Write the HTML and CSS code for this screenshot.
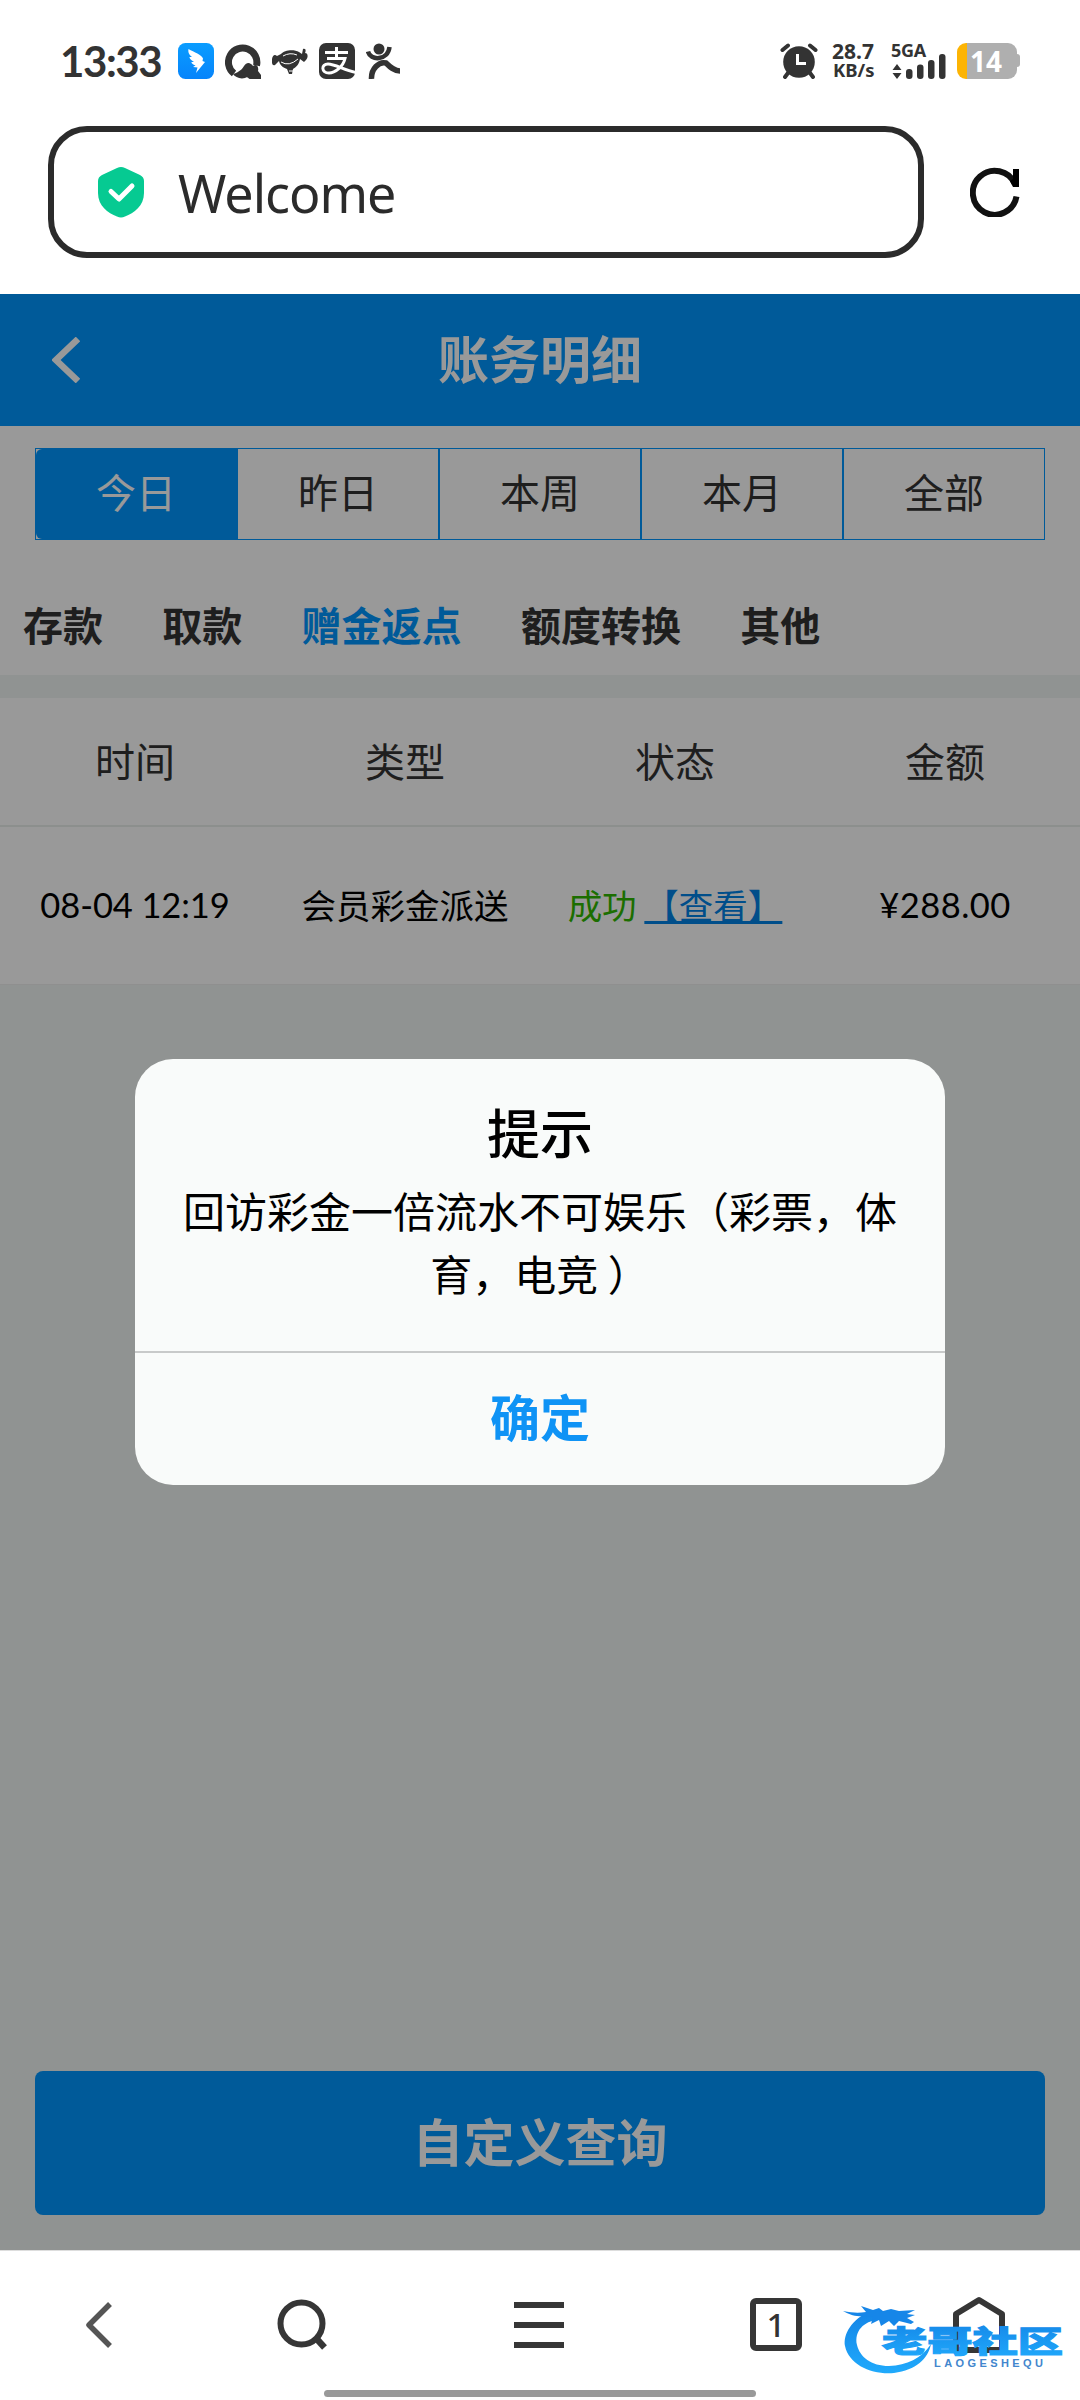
FILE: index.html
```html
<!DOCTYPE html>
<html lang="zh-CN">
<head>
<meta charset="utf-8">
<title>账务明细</title>
<link rel="stylesheet" href="styles.css">
</head>
<body>
<div class="phone">
  <header class="status">
    <span class="clock">13:33</span>
    <div class="apps">
      <svg width="36" height="36" viewBox="0 0 36 36"><defs><linearGradient id="wing" x2="0" y2="1"><stop stop-color="#0a9dff"/><stop offset="1" stop-color="#0784fb"/></linearGradient></defs><rect width="36" height="36" rx="7.5" fill="url(#wing)"/><path d="M10.500 6C16 9 24 12 25 15.500L24.500 18L27 19L18 30L19.500 24.500L15 24L17.500 22.500C14 21 13.500 20 13.500 19L16 19C12 16.500 11.500 15 11.500 14L14 14C10.500 11 10 9 10.500 6Z" fill="#fff"/></svg>
      <svg width="36" height="36" viewBox="0 0 36 36"><path d="M9 30.500A14.200 14.200 0 1 1 31.500 22.500" fill="none" stroke="#333" stroke-width="7"/><path d="M8 31C15 29 18 25 19 23C22 18 26 20 28 23C32 20 34 25 33 28L36 32V36H25C23 36 23 33 20 35C15 36.500 10 34 8 31Z" fill="#333"/></svg>
      <svg width="36" height="36" viewBox="0 0 36 36"><path d="M0 18C-.5 14 2 10 5 13L9 11C12 7 22 6 27 9L30 11L31 6C34 5 34 8 33 10C36 10 36.500 14 34 17L32 19L28 16C27 22 24 24 21 26L20 31H17L15 26C10 24 8 22 7 18L3 22C0 23 0 20 0 18Z" fill="#333"/><path d="M11 13Q18 9 25 12M9 19Q17 24 26 16M17 28h4" fill="none" stroke="#fff" stroke-width="1"/></svg>
      <svg width="36" height="36" viewBox="0 0 36 36"><rect width="36" height="36" rx="7" fill="#333"/><path d="M6 9.500H29M17.500 4V15M8 15.500H26C24 24 16 30 10 30C2 30 2 21 9 21C16 21 25 27 37 29.500" fill="none" stroke="#fff" stroke-width="3"/></svg>
      <svg width="36" height="36" viewBox="0 0 36 36"><circle cx="13" cy="6" r="5.500" fill="#333"/><path d="M2 8.500C4 18 22 18 23.500 4" fill="none" stroke="#333" stroke-width="4.500"/><path d="M5.500 36C5 26 13 18 20 20C24 24 28 28 34 28" fill="none" stroke="#333" stroke-width="5.500"/></svg>
    </div>
    <div class="signals">
      <svg class="alarm" width="38" height="36" viewBox="0 0 38 36"><circle cx="19" cy="19" r="15.800" fill="#333"/><path d="M2.500 7L8 2.500M30 2.500L35.500 7M8 30L5 34M30 30L33 34" stroke="#333" stroke-width="4" stroke-linecap="round"/><path d="M17.500 11V20.500H26" fill="none" stroke="#fff" stroke-width="3"/></svg>
      <div class="speed"><span>28.7</span><span>KB/s</span></div>
      <div class="cell"><span>5GA</span>
        <svg width="56" height="26" viewBox="0 0 56 26"><path d="M6 11L10.500 17H1.500ZM6 26L10.500 20H1.500Z" fill="#333"/><g fill="#333"><rect x="15" y="16" width="6.500" height="10" rx="3"/><rect x="26" y="11.500" width="6.500" height="14.500" rx="3"/><rect x="37" y="7" width="6.500" height="19" rx="3"/><rect x="48" y="1" width="6.500" height="25" rx="3"/></g></svg>
      </div>
      <div class="battery"><b>14</b></div>
    </div>
  </header>

  <div class="address">
    <div class="url">
      <svg width="46" height="52" viewBox="0 0 46 52"><path d="M19 2Q23 0 27 2L42 9Q46 11 46 15V27C46 40 36 47 27 50.500Q23 52.500 19 50.500C10 47 0 40 0 27V15Q0 11 4 9Z" fill="#06ca92"/><path d="M13 25.500L21 33L34 20" fill="none" stroke="#fff" stroke-width="5" stroke-linecap="round" stroke-linejoin="round"/></svg>
      <span>Welcome</span>
    </div>
    <svg width="50" height="50" viewBox="0 0 50 50"><path d="M46.500 29.500A22 22 0 1 1 45 17" fill="none" stroke="#111" stroke-width="6"/><path d="M43 2H49V20H43L40 14L43 12Z" fill="#000"/></svg>
  </div>

  <main class="page">
    <div class="titlebar">
      <svg width="28" height="46" viewBox="0 0 28 46"><path d="M26 2L4 23L26 44" fill="none" stroke="#fff" stroke-width="6.500"/></svg>
      <h1>账务明细</h1>
    </div>
    <section class="filters">
      <div class="range"><span class="on">今日</span><span>昨日</span><span>本周</span><span>本月</span><span>全部</span></div>
      <nav class="kinds"><span>存款</span><span>取款</span><span class="on">赠金返点</span><span>额度转换</span><span>其他</span></nav>
    </section>
    <section class="table">
      <div class="row head"><span>时间</span><span>类型</span><span>状态</span><span>金额</span></div>
      <div class="row"><span class="num">08-04 12:19</span><span>会员彩金派送</span><span><i>成功</i> <a>【查看】</a></span><span class="num money">¥288.00</span></div>
    </section>
    <button class="query">自定义查询</button>
    <div class="mask">
      <div class="dialog">
        <h2>提示</h2>
        <p>回访彩金一倍流水不可娱乐（彩票，体<br>育，电竞 ）</p>
        <button>确定</button>
      </div>
    </div>
  </main>

  <footer class="toolbar">
    <svg class="back" width="28" height="46" viewBox="0 0 28 46"><path d="M25 2L4 23L25 44" fill="none" stroke="#555" stroke-width="5.500" stroke-linejoin="round"/></svg>
    <svg class="search" width="52" height="52" viewBox="0 0 52 52"><circle cx="24.500" cy="24.500" r="21" fill="none" stroke="#363636" stroke-width="6"/><path d="M38 38L47.500 48.500" stroke="#363636" stroke-width="6.500"/></svg>
    <svg class="menu" width="50" height="46" viewBox="0 0 50 46"><path d="M0 3H50M0 23H50M0 43H50" stroke="#363636" stroke-width="6"/></svg>
    <span class="tabs">1</span>
    <svg class="home" width="52" height="58" viewBox="0 0 52 58"><path d="M3 54V18L26 4L49 18V54Z" fill="none" stroke="#363636" stroke-width="6" stroke-linejoin="round"/></svg>
    <div class="home-bar"></div>
  </footer>

  <svg class="brand" width="230" height="84" viewBox="0 0 230 84">
    <defs><linearGradient id="water" x2="0" y2="1"><stop stop-color="#1484e6"/><stop offset="1" stop-color="#20aafc"/></linearGradient></defs>
    <path d="M30 12C10 20 2 36 4 47C8 66 31 76 53 74C75 71 87 60 90 45C80 60 66 66 48 67C30 67 19 58 16 46C13 32 23 22 37 21Z" fill="url(#water)"/>
    <path d="M2 12C12 14 18 14 25 13L20 7L32 11L38 9L42 12L50 10L58 12L74 11L66 15L74 16L66 19L73 23L70 25L58 22L53 27L48 22L40 27L38 21L30 25L32 18L22 17C13 18 8 15 2 12Z" fill="#1686e8"/>
    <text class="brand-name" transform="translate(41 53) scale(1.510 1)" fill="url(#water)" stroke="url(#water)">老哥社区</text>
    <text class="brand-sub" x="93" y="67.500" textLength="109" fill="#4386cd">LAOGESHEQU</text>
  </svg>
</div>
</body>
</html>
```
FILE: styles.css
```css
* { box-sizing: border-box; }
body { margin: 0; background: #fff; font-family: "Noto Sans CJK SC", "Noto Sans", sans-serif; color: #333; }
svg { display: block; flex: none; }
button { border: 0; font-family: inherit; }
.phone { position: relative; width: 1080px; height: 2400px; display: flex; flex-direction: column; overflow: hidden; }

/* system status */
.status { height: 126px; padding: 43px 63px 0 60px; display: flex; align-items: flex-start; }
.clock { width: 118px; font: 700 42px/36px Lato, sans-serif; letter-spacing: -1.4px; white-space: nowrap; }
.apps { display: flex; gap: 11px; }
.signals { margin-left: auto; display: flex; align-items: flex-start; }
.alarm { margin-right: 14px; }
.speed { width: 59px; display: flex; flex-direction: column; gap: 3px; font: 700 18.5px/16px "Noto Sans", sans-serif; white-space: nowrap; }
.speed span:first-child { font-size: 21px; line-height: 16px; }
.speed span:last-child { margin-left: 1px; }
.cell { width: 66px; font: 700 18px/14px "Noto Sans", sans-serif; letter-spacing: -.3px; display: flex; flex-direction: column; }
.cell svg { margin-top: -4px; }
.battery { width: 60px; height: 36px; border-radius: 9px; background: linear-gradient(90deg, #fcb404 10px, #afafaf 10px); color: #fff; text-align: center; position: relative; }
.battery b { font: 700 28px/36px "Noto Sans", sans-serif; margin-right: 2px; }
.battery::after { content: ""; position: absolute; left: 60px; top: 11px; width: 3px; height: 13px; border-radius: 0 3px 3px 0; background: #afafaf; }

/* browser address bar */
.address { height: 168px; padding: 0 60px 36px 48px; display: flex; align-items: center; justify-content: space-between; }
.url { width: 876px; height: 132px; border: 6px solid #2b2b2b; border-radius: 39px; padding-left: 44px; display: flex; align-items: center; gap: 34px; }
.url span { font: 400 52px/60px "Noto Sans", sans-serif; letter-spacing: -1px; color: #2b2b2b; padding-top: 2px; }

/* page */
.page { position: relative; height: 1956px; background: #f0f5f3; display: flex; flex-direction: column; }
.titlebar { height: 132px; padding: 0 52px; background: #0096ff; color: #fff; display: grid; grid-template-columns: 28px 1fr 28px; align-items: center; }
.titlebar h1 { margin: 0; padding-bottom: 6px; font-size: 51px; line-height: 60px; text-align: center; }
.filters { height: 249px; padding-top: 22px; background: #fff; }
.range { margin: 0 35px; height: 92px; border: 1px solid #0096ff; display: flex; font-size: 40px; }
.range span { flex: 1; line-height: 85px; text-align: center; border-left: 2px solid #0096ff; }
.range span:first-child { border-left: 0; }
.range .on { background: #0096ff; color: #fff; border-radius: 6px 0 0 6px; }
.kinds { display: flex; gap: 59.3px; padding: 54px 23px 0; font-size: 40px; line-height: 60px; font-weight: 700; white-space: nowrap; }
.kinds .on { color: #0096ff; }
.table { margin-top: 23px; background: #fff; }
.row { display: grid; grid-template-columns: repeat(4, 270px); height: 158px; align-items: center; text-align: center; font-size: 34.5px; line-height: 50px; color: #000; white-space: nowrap; border-bottom: 1px solid #eee; }
.row span { padding-bottom: 4px; }
.row.head { height: 129px; font-size: 40px; color: #333; border-bottom: 2px solid #eaeeec; }
.row i { font-style: normal; color: #2fb800; }
.row a { color: #0082e6; text-decoration: underline; text-decoration-thickness: 3px; text-underline-offset: 2px; }
.row .num { padding-bottom: 1px; font-family: Lato, sans-serif; letter-spacing: -.1px; }
.row .money { letter-spacing: .5px; }
.query { margin: auto 35px 35px; padding: 0 0 6px; height: 144px; border-radius: 8px; background: #0096ff; color: #fff; font-size: 51px; font-weight: 700; }

/* message dialog */
.mask { position: absolute; inset: 0; background: rgba(0, 0, 0, .4); display: flex; align-items: center; justify-content: center; }
.dialog { width: 810px; height: 426px; border-radius: 38px; background: #f9fbfa; color: #000; text-align: center; overflow: hidden; display: flex; flex-direction: column; }
.dialog h2 { margin: 34px 0 0; font-size: 53px; font-weight: 500; line-height: 76px; }
.dialog p { margin: 9px 0 0; font-size: 42px; line-height: 63px; white-space: nowrap; }
.dialog button { margin-top: auto; padding: 0 0 8px; height: 134px; border-top: 2px solid #c8caca; background: none; color: #0f93f5; font-size: 50px; font-weight: 700; }

/* browser toolbar */
.toolbar { position: relative; height: 150px; padding-bottom: 2px; border-top: 1px solid #ddd; display: flex; align-items: center; background: #fff; }
.back { margin-left: 85px; }
.search { margin-left: 164px; }
.menu { margin-left: 185px; }
.tabs { margin-left: 186px; width: 52px; height: 53px; border: 6px solid #363636; border-radius: 6px; font: 500 33px/41px "Noto Sans", sans-serif; text-align: center; }
.home { margin-left: 151px; }
.home-bar { position: absolute; left: 324px; bottom: 3px; width: 432px; height: 7px; border-radius: 4px; background: #999; }
.brand { position: absolute; left: 841px; top: 2299px; }
.brand-name { font: 900 30px "Noto Sans CJK SC", sans-serif; stroke-width: 1.1px; }
.brand-sub { font: 700 11px "Liberation Sans", sans-serif; }
```
